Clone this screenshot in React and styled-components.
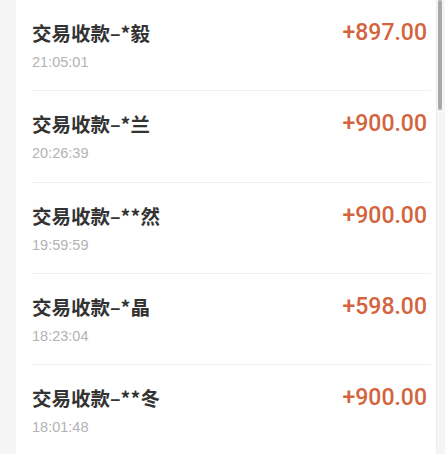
import React from "react";
import styled, { createGlobalStyle } from "styled-components";

const Global = createGlobalStyle`
  html, body { margin: 0; padding: 0; background: #f5f5f5; }
  body { font-family: "Noto Sans", "Noto Sans CJK SC", sans-serif; }
`;

const Page = styled.div`
  position: relative;
  height: 454px;
  overflow: hidden;
  padding-left: 16px;
  box-sizing: border-box;
  background: #f5f5f5;
`;

const Card = styled.div`
  width: 421px;
  height: 454px;
  background: #ffffff;
  border-right: 1px solid #ececec;
  box-sizing: border-box;
`;

const Row = styled.div`
  display: flex;
  justify-content: space-between;
  align-items: flex-start;
  margin: 0 5px 0 16px;
  padding: 20px 4px 0 0;
  border-bottom: 1px solid #f0f0f0;
  height: 91.3px;
  box-sizing: border-box;
`;

const Info = styled.div`
  display: flex;
  flex-direction: column;
  gap: 6px;
`;

const Title = styled.div`
  font-family: "Noto Sans CJK SC", "Noto Sans", sans-serif;
  font-size: 19.5px;
  line-height: 26px;
  font-weight: 600;
  color: #333333;
`;

const Time = styled.div`
  font-family: "Liberation Sans", Arial, sans-serif;
  font-size: 14.5px;
  line-height: 20px;
  color: #b3b3b3;
`;

const Amount = styled.div`
  font-family: Roboto, "Noto Sans", sans-serif;
  font-size: 23px;
  line-height: 26px;
  font-weight: 500;
  color: #d3643d;
`;

const Thumb = styled.div`
  position: absolute;
  top: 0;
  left: 438px;
  width: 4px;
  height: 110px;
  border-radius: 2px;
  background: #a8a8a8;
`;

const items = [
  { name: "交易收款–*毅", time: "21:05:01", amount: "+897.00" },
  { name: "交易收款–*兰", time: "20:26:39", amount: "+900.00" },
  { name: "交易收款–**然", time: "19:59:59", amount: "+900.00" },
  { name: "交易收款–*晶", time: "18:23:04", amount: "+598.00" },
  { name: "交易收款–**冬", time: "18:01:48", amount: "+900.00" },
];

export default function App() {
  return (
    <>
      <Global />
      <Page>
        <Card>
          {items.map((it, i) => (
            <Row key={i}>
              <Info>
                <Title>{it.name}</Title>
                <Time>{it.time}</Time>
              </Info>
              <Amount>{it.amount}</Amount>
            </Row>
          ))}
        </Card>
        <Thumb />
      </Page>
    </>
  );
}
